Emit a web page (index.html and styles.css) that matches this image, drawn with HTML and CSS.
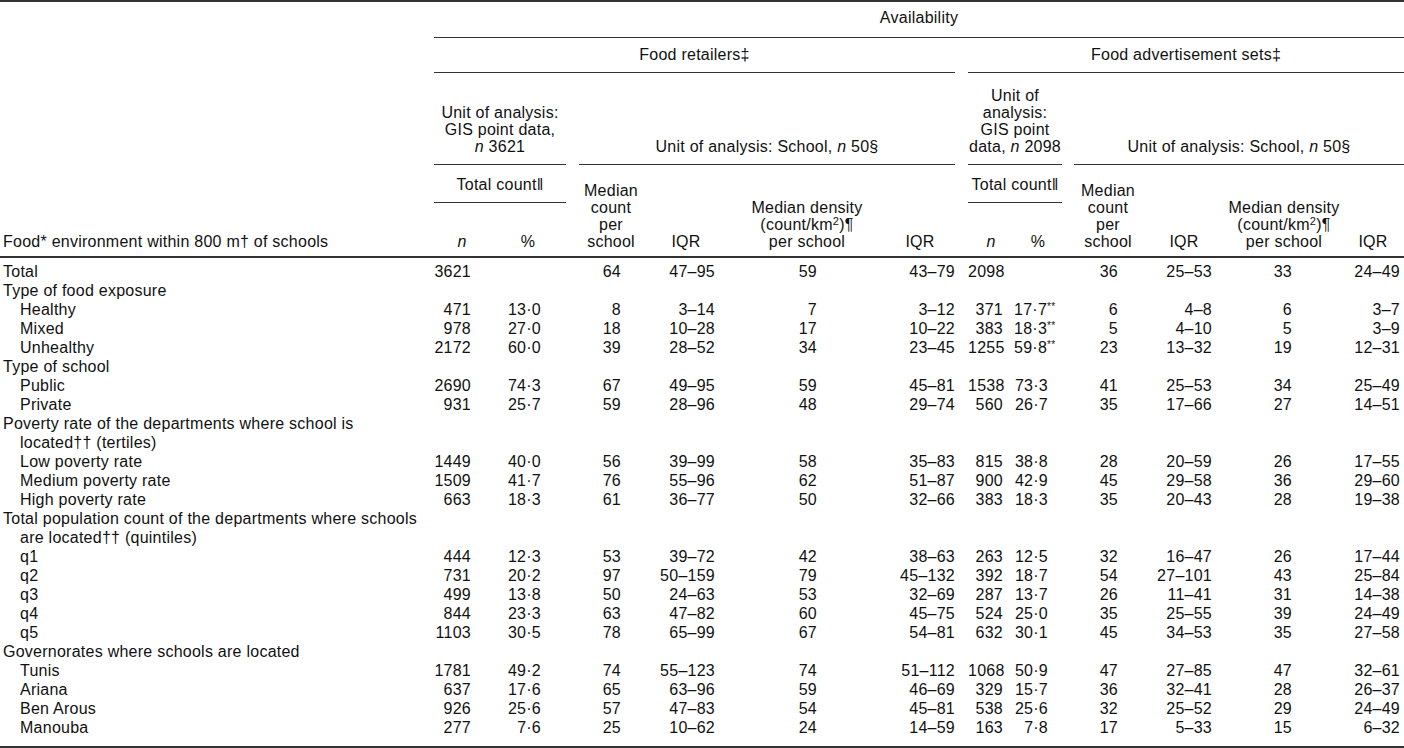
FILE: index.html
```html
<!DOCTYPE html>
<html lang="en">
<head>
<meta charset="utf-8">
<title>Food environment within 800 m of schools</title>
<link rel="stylesheet" href="styles.css">
</head>
<body>
<table class="tbl">
<colgroup>
<col class="w-label"><col class="w-n1"><col class="w-p1"><col class="w-gap"><col class="w-mc1"><col class="w-iqr1"><col class="w-md1"><col class="w-iqr2"><col class="w-gap"><col class="w-n2"><col class="w-p2"><col class="w-gap2"><col class="w-mc2"><col class="w-iqr3"><col class="w-md2"><col class="w-iqr4">
</colgroup>
<thead>
<tr class="ra">
<th class="label" rowspan="5">Food* environment within 800 m† of schools</th>
<th class="rule" colspan="15">Availability</th>
</tr>
<tr class="rb">
<th class="rule" colspan="7">Food retailers‡</th>
<th></th>
<th class="rule" colspan="7">Food advertisement sets‡</th>
</tr>
<tr class="rc">
<th class="rule" colspan="2">Unit of analysis:<br>GIS point data,<br><i>n</i> 3621</th>
<th></th>
<th class="rule" colspan="4">Unit of analysis: School, <i>n</i> 50§</th>
<th></th>
<th class="rule tall" colspan="2">Unit of<br>analysis:<br>GIS point<br>data, <i>n</i> 2098</th>
<th></th>
<th class="rule" colspan="4">Unit of analysis: School, <i>n</i> 50§</th>
</tr>
<tr class="rd">
<th class="rule" colspan="2">Total count‖</th>
<th rowspan="2" class="end"></th>
<th rowspan="2" class="end">Median<br>count<br>per<br>school</th>
<th rowspan="2" class="end">IQR</th>
<th rowspan="2" class="end">Median density<br>(count/km<sup>2</sup>)¶<br>per school</th>
<th rowspan="2" class="end">IQR</th>
<th rowspan="2" class="end"></th>
<th class="rule" colspan="2">Total count‖</th>
<th rowspan="2" class="end"></th>
<th rowspan="2" class="end">Median<br>count<br>per<br>school</th>
<th rowspan="2" class="end">IQR</th>
<th rowspan="2" class="end">Median density<br>(count/km<sup>2</sup>)¶<br>per school</th>
<th rowspan="2" class="end">IQR</th>
</tr>
<tr class="re">
<th class="end"><i>n</i></th>
<th class="end">%</th>
<th class="end"><i>n</i></th>
<th class="end">%</th>
</tr>
</thead>
<tbody>
<tr class="first"><td>Total</td><td>3621</td><td></td><td></td><td>64</td><td>47–95</td><td>59</td><td>43–79</td><td></td><td>2098</td><td></td><td></td><td>36</td><td>25–53</td><td>33</td><td>24–49</td></tr>
<tr class="cat"><td>Type of food exposure</td><td colspan="15"></td></tr>
<tr class="sub"><td>Healthy</td><td>471</td><td>13·0</td><td></td><td>8</td><td>3–14</td><td>7</td><td>3–12</td><td></td><td>371</td><td>17·7<sup class="ast">**</sup></td><td></td><td>6</td><td>4–8</td><td>6</td><td>3–7</td></tr>
<tr class="sub"><td>Mixed</td><td>978</td><td>27·0</td><td></td><td>18</td><td>10–28</td><td>17</td><td>10–22</td><td></td><td>383</td><td>18·3<sup class="ast">**</sup></td><td></td><td>5</td><td>4–10</td><td>5</td><td>3–9</td></tr>
<tr class="sub"><td>Unhealthy</td><td>2172</td><td>60·0</td><td></td><td>39</td><td>28–52</td><td>34</td><td>23–45</td><td></td><td>1255</td><td>59·8<sup class="ast">**</sup></td><td></td><td>23</td><td>13–32</td><td>19</td><td>12–31</td></tr>
<tr class="cat"><td>Type of school</td><td colspan="15"></td></tr>
<tr class="sub"><td>Public</td><td>2690</td><td>74·3</td><td></td><td>67</td><td>49–95</td><td>59</td><td>45–81</td><td></td><td>1538</td><td>73·3</td><td></td><td>41</td><td>25–53</td><td>34</td><td>25–49</td></tr>
<tr class="sub"><td>Private</td><td>931</td><td>25·7</td><td></td><td>59</td><td>28–96</td><td>48</td><td>29–74</td><td></td><td>560</td><td>26·7</td><td></td><td>35</td><td>17–66</td><td>27</td><td>14–51</td></tr>
<tr class="cat"><td>Poverty rate of the departments where school is<br><span class="ind">located†† (tertiles)</span></td><td colspan="15"></td></tr>
<tr class="sub"><td>Low poverty rate</td><td>1449</td><td>40·0</td><td></td><td>56</td><td>39–99</td><td>58</td><td>35–83</td><td></td><td>815</td><td>38·8</td><td></td><td>28</td><td>20–59</td><td>26</td><td>17–55</td></tr>
<tr class="sub"><td>Medium poverty rate</td><td>1509</td><td>41·7</td><td></td><td>76</td><td>55–96</td><td>62</td><td>51–87</td><td></td><td>900</td><td>42·9</td><td></td><td>45</td><td>29–58</td><td>36</td><td>29–60</td></tr>
<tr class="sub"><td>High poverty rate</td><td>663</td><td>18·3</td><td></td><td>61</td><td>36–77</td><td>50</td><td>32–66</td><td></td><td>383</td><td>18·3</td><td></td><td>35</td><td>20–43</td><td>28</td><td>19–38</td></tr>
<tr class="cat"><td>Total population count of the departments where schools<br><span class="ind">are located†† (quintiles)</span></td><td colspan="15"></td></tr>
<tr class="sub"><td>q1</td><td>444</td><td>12·3</td><td></td><td>53</td><td>39–72</td><td>42</td><td>38–63</td><td></td><td>263</td><td>12·5</td><td></td><td>32</td><td>16–47</td><td>26</td><td>17–44</td></tr>
<tr class="sub"><td>q2</td><td>731</td><td>20·2</td><td></td><td>97</td><td>50–159</td><td>79</td><td>45–132</td><td></td><td>392</td><td>18·7</td><td></td><td>54</td><td>27–101</td><td>43</td><td>25–84</td></tr>
<tr class="sub"><td>q3</td><td>499</td><td>13·8</td><td></td><td>50</td><td>24–63</td><td>53</td><td>32–69</td><td></td><td>287</td><td>13·7</td><td></td><td>26</td><td>11–41</td><td>31</td><td>14–38</td></tr>
<tr class="sub"><td>q4</td><td>844</td><td>23·3</td><td></td><td>63</td><td>47–82</td><td>60</td><td>45–75</td><td></td><td>524</td><td>25·0</td><td></td><td>35</td><td>25–55</td><td>39</td><td>24–49</td></tr>
<tr class="sub"><td>q5</td><td>1103</td><td>30·5</td><td></td><td>78</td><td>65–99</td><td>67</td><td>54–81</td><td></td><td>632</td><td>30·1</td><td></td><td>45</td><td>34–53</td><td>35</td><td>27–58</td></tr>
<tr class="cat"><td>Governorates where schools are located</td><td colspan="15"></td></tr>
<tr class="sub"><td>Tunis</td><td>1781</td><td>49·2</td><td></td><td>74</td><td>55–123</td><td>74</td><td>51–112</td><td></td><td>1068</td><td>50·9</td><td></td><td>47</td><td>27–85</td><td>47</td><td>32–61</td></tr>
<tr class="sub"><td>Ariana</td><td>637</td><td>17·6</td><td></td><td>65</td><td>63–96</td><td>59</td><td>46–69</td><td></td><td>329</td><td>15·7</td><td></td><td>36</td><td>32–41</td><td>28</td><td>26–37</td></tr>
<tr class="sub"><td>Ben Arous</td><td>926</td><td>25·6</td><td></td><td>57</td><td>47–83</td><td>54</td><td>45–81</td><td></td><td>538</td><td>25·6</td><td></td><td>32</td><td>25–52</td><td>29</td><td>24–49</td></tr>
<tr class="sub last"><td>Manouba</td><td>277</td><td>7·6</td><td></td><td>25</td><td>10–62</td><td>24</td><td>14–59</td><td></td><td>163</td><td>7·8</td><td></td><td>17</td><td>5–33</td><td>15</td><td>6–32</td></tr>
</tbody>
</table>
</body>
</html>
```

FILE: styles.css
```css
html, body {
  margin: 0;
  padding: 0;
  background: #ffffff;
}

.tbl {
  width: 1404px;
  margin-top: 0;
  border-collapse: collapse;
  table-layout: fixed;
  font-family: "Liberation Sans", Arial, sans-serif;
  font-size: 16px;
  letter-spacing: 0.25px;
  color: #111111;
}

.w-label { width: 434px; }
.w-n1 { width: 56px; }
.w-p1 { width: 76px; }
.w-gap { width: 13px; }
.w-mc1 { width: 64px; }
.w-iqr1 { width: 86px; }
.w-md1 { width: 156px; }
.w-iqr2 { width: 70px; }
.w-n2 { width: 46px; }
.w-p2 { width: 48px; }
.w-gap2 { width: 12px; }
.w-mc2 { width: 68px; }
.w-iqr3 { width: 84px; }
.w-md2 { width: 116px; }
.w-iqr4 { width: 62px; }

/* header */
.tbl th {
  font-weight: normal;
  line-height: 17px;
  padding: 0 0 9px 0;
  vertical-align: bottom;
  text-align: center;
  white-space: nowrap;
}

.tbl th.label {
  text-align: left;
  padding-left: 3px;
  padding-bottom: 6px;
}

.tbl th.end {
  padding-bottom: 6px;
}

.tbl th sup {
  font-size: 11px;
  line-height: 0;
  vertical-align: 5px;
}

.tbl .ra th {
  border-top: 2px solid #333333;
  padding-top: 7px;
}

.tbl .ra th.rule {
  padding-bottom: 11px;
}

.tbl .rb th { padding-top: 8px; }
.tbl .rc th.tall { padding-top: 14px; }
.tbl .rd th.rule { padding-top: 11px; }
.tbl .re th { padding-top: 30px; }

.tbl th.rule {
  border-bottom: 1px solid #333333;
}

/* body */
.tbl td {
  padding: 0;
  line-height: 19px;
  text-align: right;
  white-space: nowrap;
}

.tbl td:first-child {
  text-align: left;
  padding-left: 3px;
}

.tbl .sub td:first-child {
  padding-left: 20px;
}

.tbl .ind {
  display: inline-block;
  padding-left: 17px;
}

.tbl tr.first td {
  border-top: 2px solid #333333;
  padding-top: 4px;
}

.tbl tr.last td {
  border-bottom: 2px solid #333333;
  padding-bottom: 9px;
}

.tbl td:nth-child(2) { padding-right: 19px; }
.tbl td:nth-child(3) { padding-right: 25px; }
.tbl td:nth-child(5) { padding-right: 22px; }
.tbl td:nth-child(6) { padding-right: 14px; }
.tbl td:nth-child(7) { padding-right: 68px; }
.tbl td:nth-child(8) { padding-right: 0; }
.tbl td:nth-child(10) { padding-right: 11px; }
.tbl td:nth-child(11) { padding-right: 14px; }
.tbl td:nth-child(13) { padding-right: 24px; }
.tbl td:nth-child(14) { padding-right: 14px; }
.tbl td:nth-child(15) { padding-right: 50px; }
.tbl td:nth-child(16) { padding-right: 4px; }

.tbl .cat td:nth-child(2) { padding-right: 0; }

.tbl sup.ast {
  font-size: 10px;
  line-height: 0;
  vertical-align: 5px;
  margin-right: -6px;
}
```
